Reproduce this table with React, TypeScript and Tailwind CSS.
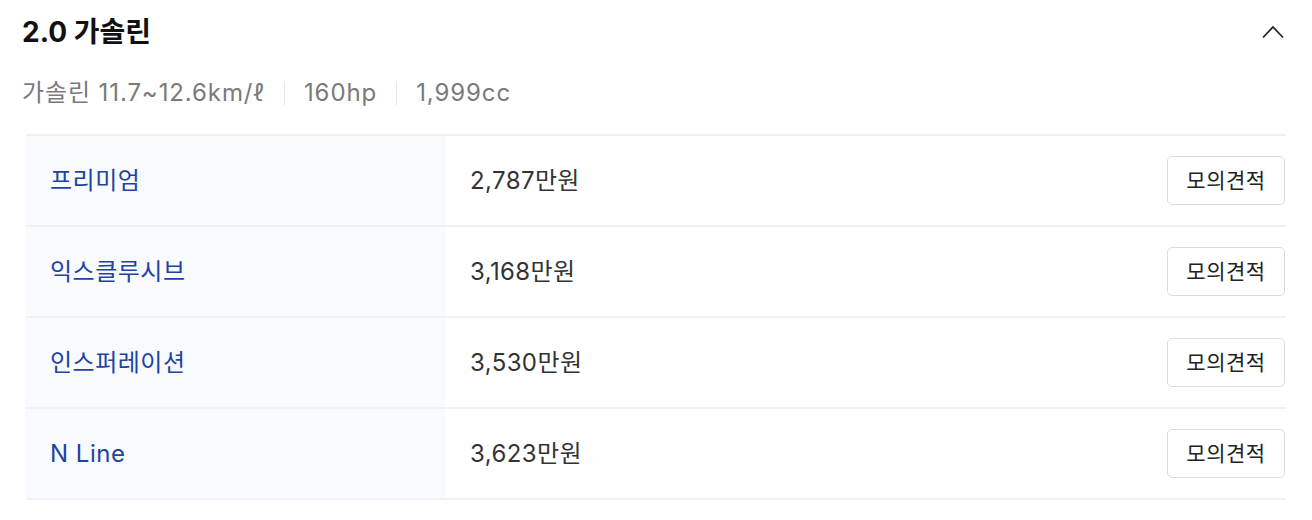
import React from 'react';

interface Trim {
  name: string;
  price: string;
}

const trims: Trim[] = [
  { name: '프리미엄', price: '2,787만원' },
  { name: '익스클루시브', price: '3,168만원' },
  { name: '인스퍼레이션', price: '3,530만원' },
  { name: 'N Line', price: '3,623만원' },
];

const font = { fontFamily: 'Inter, "Noto Sans CJK KR", sans-serif' };

const TrimRow: React.FC<{ trim: Trim }> = ({ trim }) => (
  <div className="flex h-[91px] border-b-2 border-[#f0f1f3]">
    <div className="flex w-[420px] items-center bg-[#f8fafd] pl-[24px] text-[24px] tracking-[0.5px] text-[#1d44a3]">
      {trim.name}
    </div>
    <div className="flex flex-1 items-center justify-between pl-[24px] pr-px">
      <span className="text-[24px] tracking-[0.4px] text-[#333]">{trim.price}</span>
      <button className="h-[49px] w-[118px] rounded-[5px] border border-[#dcdcdc] bg-white text-[21px] tracking-[0.5px] text-[#222]">
        모의견적
      </button>
    </div>
  </div>
);

export default function App() {
  return (
    <div className="bg-white px-[26px] pl-[22px] pt-[14px]" style={font}>
      <div className="flex h-[36px] items-center justify-between">
        <h2 className="text-[28px] font-bold tracking-[0px] text-[#111]">2.0 가솔린</h2>
        <svg width="24" height="14" viewBox="0 0 24 14" className="mr-[1px]">
          <path d="M2 12.5 L12 2 L22 12.5" fill="none" stroke="#222" strokeWidth="1.8" />
        </svg>
      </div>
      <div className="mt-[28px] flex h-[30px] items-center text-[24px] tracking-[0.9px] text-[#7a7a7a]">
        <span>가솔린 11.7~12.6km/ℓ</span>
        <span className="mx-[19px] h-[24px] w-px bg-[#e6e6e6]" />
        <span>160hp</span>
        <span className="mx-[19px] h-[24px] w-px bg-[#e6e6e6]" />
        <span>1,999cc</span>
      </div>
      <div className="ml-[4px] mt-[26px] border-t-2 border-[#eef0f2]">
        {trims.map((t) => (
          <TrimRow key={t.name} trim={t} />
        ))}
      </div>
    </div>
  );
}
